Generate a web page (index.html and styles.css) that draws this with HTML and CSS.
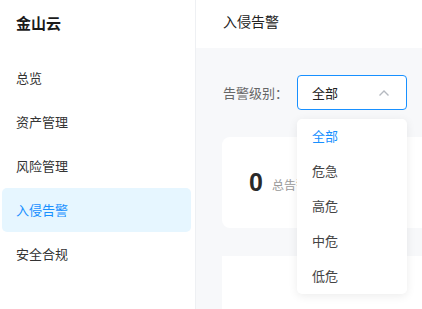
FILE: index.html
```html
<!DOCTYPE html>
<html lang="zh-CN">
<head>
  <meta charset="UTF-8">
  <meta name="viewport" content="width=device-width, initial-scale=1.0">
  <title>入侵告警</title>
  <link rel="stylesheet" href="styles.css">
</head>
<body>
  <div class="layout">
    <aside class="sidebar">
      <div class="logo">金山云</div>
      <nav class="menu">
        <div class="menu-item">总览</div>
        <div class="menu-item">资产管理</div>
        <div class="menu-item">风险管理</div>
        <div class="menu-item active">入侵告警</div>
        <div class="menu-item">安全合规</div>
      </nav>
    </aside>

    <main class="main">
      <header class="header">入侵告警</header>
      <section class="content">
        <div class="filter">
          <span class="filter-label">告警级别：</span>
          <div class="select">
            <div class="select-box">
              <span>全部</span>
              <svg class="chevron" width="12" height="8" viewBox="0 0 12 8">
                <path d="M1.5 6.5 L6 2 L10.5 6.5" fill="none" stroke="#b5b9c0" stroke-width="1.4"/>
              </svg>
            </div>
            <ul class="dropdown">
              <li class="option selected">全部</li>
              <li class="option">危急</li>
              <li class="option">高危</li>
              <li class="option">中危</li>
              <li class="option">低危</li>
            </ul>
          </div>
        </div>

        <div class="card stat">
          <span class="stat-num">0</span>
          <span class="stat-label">总告警</span>
        </div>

        <div class="card table"></div>
      </section>
    </main>
  </div>
</body>
</html>
```

FILE: styles.css
```css
body {
  margin: 0;
  padding: 0;
  font-family: "Noto Sans", "Noto Sans CJK SC", sans-serif;
  color: #333;
  overflow: hidden;
}

.layout {
  display: flex;
  height: 309px;
}

.sidebar {
  width: 195px;
  flex-shrink: 0;
  background: #fff;
  border-right: 1px solid #eef0f3;
}

.logo {
  height: 48px;
  line-height: 46px;
  padding-left: 16px;
  font-size: 15px;
  font-weight: bold;
  color: #1a1a1a;
}

.menu {
  padding: 8px 4px 0 2px;
}

.menu-item {
  height: 44px;
  line-height: 44px;
  padding-left: 14px;
  font-size: 13px;
  color: #333;
  border-radius: 5px;
}

.menu-item.active {
  background: #e6f6ff;
  color: #1890ff;
}

.main {
  flex: 1;
  background: #f7f8fa;
  min-width: 0;
}

.header {
  height: 48px;
  line-height: 44px;
  background: #fff;
  padding-left: 27px;
  font-size: 14px;
  color: #222;
}

.content {
  padding: 27px 0 0 26px;
}

.filter {
  display: flex;
  align-items: center;
  height: 35px;
}

.filter-label {
  font-size: 13px;
  color: #666;
  margin-left: 1px;
  width: 74px;
}

.select {
  position: relative;
  width: 110px;
}

.select-box {
  box-sizing: border-box;
  height: 35px;
  border: 1px solid #1890ff;
  border-radius: 4px;
  background: #fff;
  display: flex;
  align-items: center;
  justify-content: space-between;
  padding: 0 16px 0 14px;
  font-size: 13px;
  color: #222;
}

.chevron {
  display: block;
}

.dropdown {
  position: absolute;
  top: 44px;
  left: 0;
  width: 110px;
  margin: 0;
  padding: 0;
  list-style: none;
  background: #fff;
  border-radius: 5px;
  box-shadow: 0 2px 10px rgba(0, 0, 0, 0.08);
  z-index: 2;
}

.option {
  height: 35px;
  line-height: 35px;
  padding-left: 15px;
  font-size: 13px;
  color: #444;
}

.option.selected {
  color: #1890ff;
}

.card {
  background: #fff;
  border-radius: 8px;
}

.stat {
  margin-top: 27px;
  height: 91px;
  display: flex;
  align-items: center;
  padding-left: 27px;
  border-radius: 8px 0 0 8px;
}

.stat-num {
  font-family: "Liberation Sans", Arial, sans-serif;
  font-size: 25px;
  font-weight: bold;
  color: #2a2a2a;
  margin-right: 9px;
}

.stat-label {
  font-size: 12px;
  color: #999;
  margin-top: 5px;
}

.table {
  margin-top: 28px;
  height: 60px;
  border-radius: 0;
}
```
